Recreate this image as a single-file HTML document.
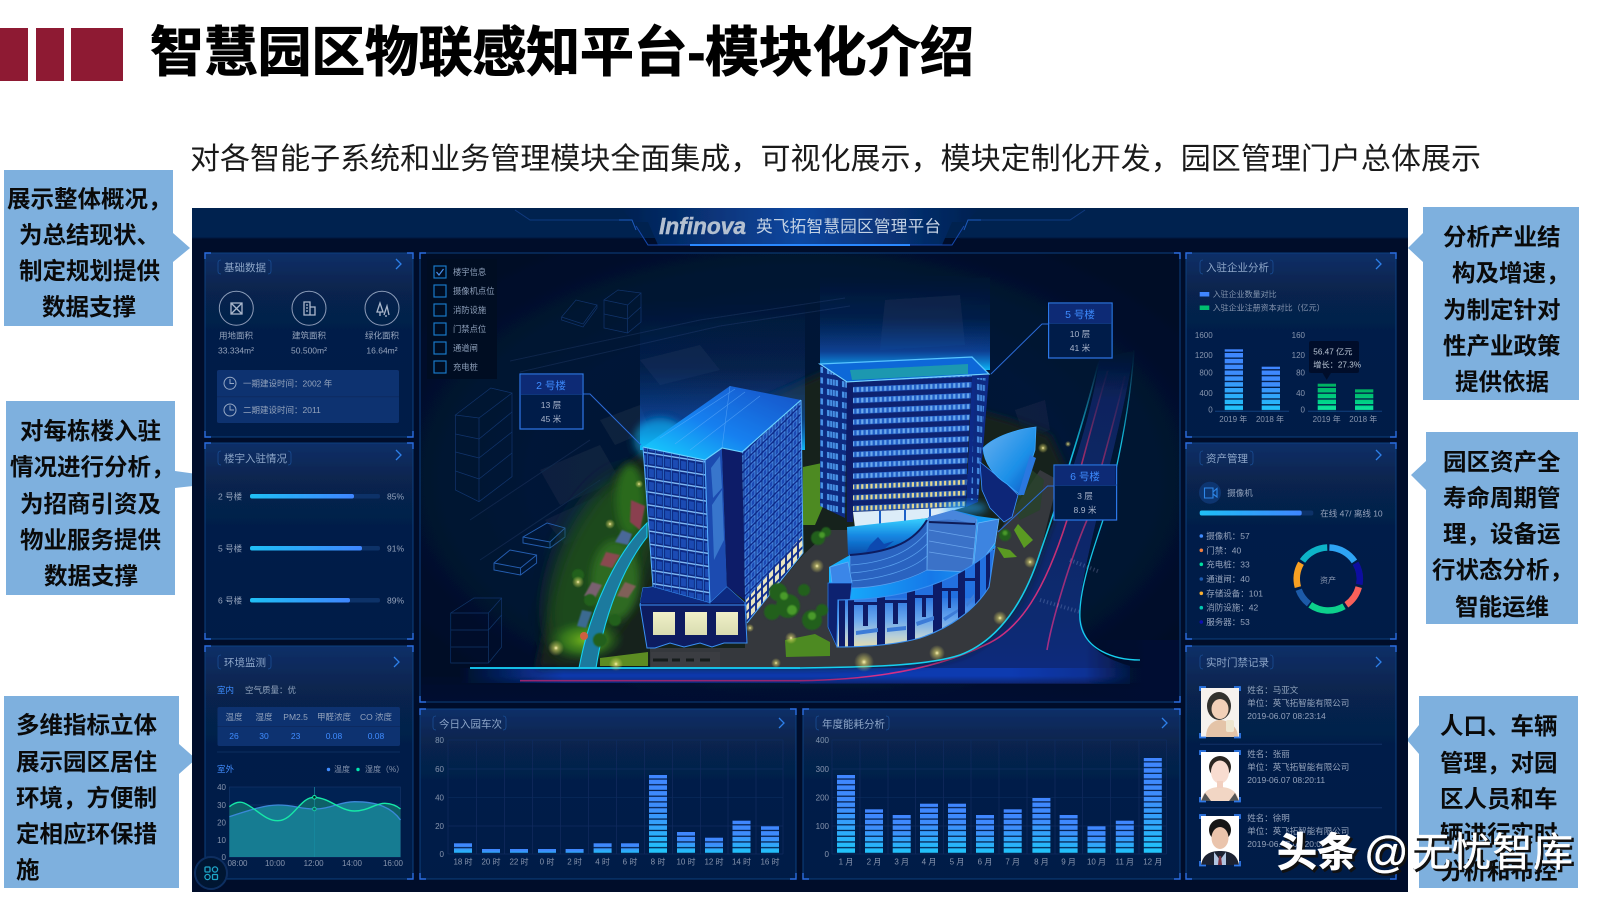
<!DOCTYPE html>
<html lang="zh"><head><meta charset="utf-8"><title>智慧园区物联感知平台-模块化介绍</title>
<style>
html,body{margin:0;padding:0;background:#fff}
svg{display:block}
text{font-family:"Liberation Sans","Noto Sans CJK SC",sans-serif}
.h{font-weight:700;font-size:23.5px;fill:#0a0a0a}
.s{font-size:9px;fill:#9aaac4}
.t{font-size:10.5px;fill:#8fa6c8}
.m{font-size:8.5px;fill:#93a3bc}
.ax{font-size:8px;fill:#8494ae}
.c{text-anchor:middle}
.e{text-anchor:end}
.b{fill:#3f8cff}
</style></head><body>
<svg width="1600" height="900" viewBox="0 0 1600 900" xmlns="http://www.w3.org/2000/svg">
<defs>
<linearGradient id="pan" x1="0" y1="0" x2="0" y2="1"><stop offset="0" stop-color="#0a2f68"/><stop offset=".18" stop-color="#07254f"/><stop offset=".5" stop-color="#051d48"/><stop offset="1" stop-color="#051d47"/></linearGradient>
<linearGradient id="bar" x1="0" y1="0" x2="0" y2="1"><stop offset="0" stop-color="#3f86ff"/><stop offset=".4" stop-color="#3e8cfb"/><stop offset="1" stop-color="#1fc6fa"/></linearGradient>
<linearGradient id="grn" x1="0" y1="0" x2="0" y2="1"><stop offset="0" stop-color="#00b060"/><stop offset="1" stop-color="#08e8a0"/></linearGradient>
<linearGradient id="prog" x1="0" y1="0" x2="1" y2="0"><stop offset="0" stop-color="#1fc0f5"/><stop offset="1" stop-color="#3f86ff"/></linearGradient>
<linearGradient id="hdr" x1="0" y1="0" x2="1" y2="0"><stop offset="0" stop-color="#04204f"/><stop offset=".5" stop-color="#0a47a0"/><stop offset="1" stop-color="#04204f"/></linearGradient>
<linearGradient id="beam" x1="0" y1="0" x2="0" y2="1"><stop offset="0" stop-color="#0a6cff" stop-opacity="0"/><stop offset=".45" stop-color="#0a60e0" stop-opacity=".12"/><stop offset=".8" stop-color="#0a70ff" stop-opacity=".45"/><stop offset="1" stop-color="#10c0ff" stop-opacity=".95"/></linearGradient>
<linearGradient id="roofA" x1="0" y1="1" x2="1" y2="0"><stop offset="0" stop-color="#12d8ff"/><stop offset=".45" stop-color="#1880f0"/><stop offset="1" stop-color="#1450c4"/></linearGradient>
<linearGradient id="roofC" x1="0" y1="0" x2="1" y2="0"><stop offset="0" stop-color="#14b4ff"/><stop offset=".6" stop-color="#1478e8"/><stop offset="1" stop-color="#18a4f8"/></linearGradient>
<linearGradient id="pool" x1="0" y1="0" x2="0" y2="1"><stop offset="0" stop-color="#38d0ff"/><stop offset=".5" stop-color="#1484e0"/><stop offset="1" stop-color="#0a4ca8"/></linearGradient>
<linearGradient id="facC" x1="0" y1="0" x2="0" y2="1"><stop offset="0" stop-color="#2470e0"/><stop offset=".45" stop-color="#6aa8ee"/><stop offset=".75" stop-color="#b8cfd8"/><stop offset="1" stop-color="#ecdfa4"/></linearGradient>
<linearGradient id="winBase" x1="0" y1="0" x2="0" y2="1"><stop offset="0" stop-color="#f0f0c8"/><stop offset="1" stop-color="#d8dcb0"/></linearGradient>
<linearGradient id="annex" x1="0" y1="0" x2="1" y2="1"><stop offset="0" stop-color="#6ab0f0"/><stop offset=".6" stop-color="#1c90e8"/><stop offset="1" stop-color="#0e50c0"/></linearGradient>
<linearGradient id="road" x1="0" y1="0" x2="0" y2="1"><stop offset="0" stop-color="#0a2a70" stop-opacity="0"/><stop offset=".15" stop-color="#0a2a70" stop-opacity=".7"/><stop offset=".8" stop-color="#0b2a70"/><stop offset="1" stop-color="#0a2a80"/></linearGradient>
<linearGradient id="band" x1="0" y1="0" x2="1" y2="0"><stop offset="0" stop-color="#0a3aa8" stop-opacity="0"/><stop offset=".15" stop-color="#0a3ab0"/><stop offset=".8" stop-color="#0a3ab0"/><stop offset="1" stop-color="#0a3ab0" stop-opacity="0"/></linearGradient>
<linearGradient id="bandPink" x1="0" y1="0" x2="1" y2="0"><stop offset="0" stop-color="#e0308a" stop-opacity="0"/><stop offset=".4" stop-color="#e0308a" stop-opacity=".6"/><stop offset="1" stop-color="#e0308a"/></linearGradient>
<linearGradient id="fade" x1="0" y1="0" x2="0" y2="1"><stop offset="0" stop-color="#031130" stop-opacity="0"/><stop offset=".5" stop-color="#031130" stop-opacity=".85"/><stop offset="1" stop-color="#031130"/></linearGradient>
<linearGradient id="fadeR" x1="0" y1="0" x2="1" y2="0"><stop offset="0" stop-color="#031130" stop-opacity="0"/><stop offset="1" stop-color="#031130"/></linearGradient>
<linearGradient id="fadeT" x1="0" y1="0" x2="0" y2="1"><stop offset="0" stop-color="#14d0f0" stop-opacity="0"/><stop offset=".3" stop-color="#14d0f0" stop-opacity=".9"/><stop offset="1" stop-color="#14d0f0"/></linearGradient>
<linearGradient id="fadeP" x1="0" y1="0" x2="0" y2="1"><stop offset="0" stop-color="#d8306a" stop-opacity="0"/><stop offset=".35" stop-color="#d8306a" stop-opacity=".85"/><stop offset="1" stop-color="#d8308a"/></linearGradient>
<radialGradient id="sceneBg" cx=".5" cy=".5" r=".6"><stop offset="0" stop-color="#071c34"/><stop offset=".6" stop-color="#051737"/><stop offset="1" stop-color="#020e28"/></radialGradient>
<radialGradient id="glowY"><stop offset="0" stop-color="#fff6b8"/><stop offset=".3" stop-color="#e8e070" stop-opacity=".55"/><stop offset="1" stop-color="#e8e060" stop-opacity="0"/></radialGradient>
<radialGradient id="greenG"><stop offset="0" stop-color="#7ec01e"/><stop offset=".55" stop-color="#3f8a1e" stop-opacity=".75"/><stop offset="1" stop-color="#1e5a18" stop-opacity="0"/></radialGradient>
<filter id="b1" x="-30%" y="-30%" width="160%" height="160%"><feGaussianBlur stdDeviation=".9"/></filter>
<filter id="b4" x="-30%" y="-30%" width="160%" height="160%"><feGaussianBlur stdDeviation="4"/></filter>
<filter id="b8" x="-40%" y="-40%" width="180%" height="180%"><feGaussianBlur stdDeviation="9"/></filter>
<filter id="soft"><feGaussianBlur stdDeviation=".32"/></filter>
<pattern id="segA" patternUnits="userSpaceOnUse" x="0" y="854" width="10" height="5.72"><rect y="0" width="10" height="4.5" fill="#fff"/></pattern>
<pattern id="segB" patternUnits="userSpaceOnUse" x="0" y="411.3" width="10" height="5.83"><rect y="0" width="10" height="4.5" fill="#fff"/></pattern>
<mask id="mA" maskUnits="userSpaceOnUse" x="0" y="0" width="1600" height="900"><rect y="700" width="1600" height="154" fill="url(#segA)"/></mask>
<mask id="mB" maskUnits="userSpaceOnUse" x="0" y="0" width="1600" height="900"><rect y="330" width="1600" height="81.3" fill="url(#segB)"/></mask>
<pattern id="winB" patternUnits="userSpaceOnUse" width="4.6" height="10.8" patternTransform="skewY(-2.4)"><rect width="4.6" height="10.8" fill="#0a2070"/><rect y="1.5" width="4.6" height="5.6" fill="#2460c8"/><rect x="1" y="2" width="2.2" height="4.6" fill="#6aa8ec"/></pattern>
<pattern id="winBY" patternUnits="userSpaceOnUse" width="4.6" height="10.8" patternTransform="skewY(-2.4)"><rect width="4.6" height="10.8" fill="#0a2070"/><rect y="1.5" width="4.6" height="5.6" fill="#2a5cb0"/><rect x="1" y="2" width="2.2" height="4.6" fill="#e4d890"/></pattern>
<pattern id="winBL" patternUnits="userSpaceOnUse" width="15" height="10.5" patternTransform="skewY(10)"><rect width="15" height="10.5" fill="#0a2a80"/><rect x="2" y="1.5" width="11" height="6" fill="#4a94e8"/><path d="M4.8 1.5V7.5M7.5 1.5V7.5M10.2 1.5V7.5" stroke="#0a2a80" stroke-width=".7"/></pattern>
<pattern id="winAL" patternUnits="userSpaceOnUse" width="8" height="13" patternTransform="skewY(9)"><rect width="8" height="13" fill="#0e2c84"/><rect x="1" y="2" width="5" height="8" fill="#1a4cb4"/><rect y="11.6" width="8" height="1.3" fill="#8cc8ff"/><rect x="7" width=".7" height="13" fill="#3a80e0"/></pattern>
<pattern id="winAR" patternUnits="userSpaceOnUse" width="6" height="9" patternTransform="skewY(-45)"><rect width="6" height="9" fill="#0f2c8c"/><rect x="1" y="1.4" width="4" height="6" fill="#1a48b4" stroke="#58a4f4" stroke-width=".7"/></pattern>
<pattern id="winARy" patternUnits="userSpaceOnUse" width="6" height="9" patternTransform="skewY(-45)"><rect width="6" height="9" fill="#0f2c8c"/><rect x="1" y="1.2" width="4" height="6.4" fill="#e8e4c0"/></pattern>
<clipPath id="scene"><rect x="421" y="254" width="758" height="447"/></clipPath>
<clipPath id="cFac"><path d="M838 600C885 600 950 590 995 547L989 587C975 610 950 628 920 638C895 645 865 647 837 647Z"/></clipPath>
</defs>

<!-- slide header -->
<rect x="0" y="28" width="28" height="53" fill="#8e1a33"/>
<rect x="36" y="28" width="28" height="53" fill="#8e1a33"/>
<rect x="71" y="28" width="52" height="53" fill="#8e1a33"/>
<text x="150" y="71" font-size="54" font-weight="700" fill="#000" stroke="#000" stroke-width=".9" textLength="824">智慧园区物联感知平台-模块化介绍</text>
<text x="190" y="169" font-size="30" fill="#1a1a1a" textLength="1291">对各智能子系统和业务管理模块全面集成，可视化展示，模块定制化开发，园区管理门户总体展示</text>

<!-- callouts behind panel -->
<g fill="#7eb0de">
<path d="M4 170H173V233L190 248 173 262V326H4Z"/>
<path d="M6 401H175V471L193 473.5V486L175 488V595H6Z"/>
<path d="M4 696H179V744L196 759 179 774V888H4Z"/>
<path d="M1423 207H1579V400H1423V262L1408 248 1423 233Z"/>
<path d="M1426 432H1578V624H1426V490L1411 475 1426 461Z"/>
<path d="M1419 696H1578V888H1419V754L1407 740 1419 725Z"/>
</g>
<g class="tx">
<text class="h" x="7" y="207">展示整体概况，</text><text class="h" x="19" y="243">为总结现状、</text><text class="h" x="19" y="279">制定规划提供</text><text class="h" x="42" y="315">数据支撑</text>
<text class="h" x="20" y="439">对每栋楼入驻</text><text class="h" x="10" y="475">情况进行分析，</text><text class="h" x="20" y="512">为招商引资及</text><text class="h" x="20" y="548">物业服务提供</text><text class="h" x="44" y="584">数据支撑</text>
<text class="h" x="16" y="733">多维指标立体</text><text class="h" x="16" y="770">展示园区居住</text><text class="h" x="16" y="806">环境，方便制</text><text class="h" x="16" y="842">定相应环保措</text><text class="h" x="16" y="878">施</text>
<text class="h" x="1443" y="245">分析产业结</text><text class="h" x="1452" y="281">构及增速，</text><text class="h" x="1443" y="318">为制定针对</text><text class="h" x="1443" y="354">性产业政策</text><text class="h" x="1455" y="390">提供依据</text>
<text class="h" x="1443" y="470">园区资产全</text><text class="h" x="1443" y="506">寿命周期管</text><text class="h" x="1443" y="542">理，设备运</text><text class="h" x="1432" y="578">行状态分析，</text><text class="h" x="1455" y="615">智能运维</text>
<text class="h" x="1440" y="734">人口、车辆</text><text class="h" x="1440" y="771">管理，对园</text><text class="h" x="1440" y="807">区人员和车</text><text class="h" x="1440" y="842">辆进行实时</text><text class="h" x="1440" y="879">分析和布控</text>
</g>

<!-- dashboard -->
<g filter="url(#soft)">
<rect x="192" y="208" width="1216" height="684" fill="#020f2c"/>
<rect x="192" y="208" width="1216" height="30" fill="#06224f"/>
<path d="M634 222 L648 222 L658 245 H942 L952 222 L966 222 L980 208 H620Z" fill="url(#hdr)"/>
<path d="M192 238 H640 M960 238 H1408" stroke="#04183c" stroke-width="1"/>
<path d="M515 210 L530 220 H619 M1085 210 L1070 220 H981" stroke="#0c3a80" fill="none"/>
<path d="M619 220H632L636 230M981 220H968L964 230" fill="none" stroke="#1a5cc0" stroke-width="1"/>
<path d="M636 226L648 245H952L964 226" fill="none" stroke="#144ab0" stroke-width="1"/>
<path d="M690 245H910" stroke="#2a88ff" stroke-width="2"/>
<text x="659" y="234" font-size="23" font-weight="700" font-style="italic" fill="#b4c0d0" stroke="#b4c0d0" stroke-width=".5" textLength="87" lengthAdjust="spacingAndGlyphs">Infinova</text>
<text x="756" y="232" font-size="16.6" fill="#c4d2e4" textLength="185">英飞拓智慧园区管理平台</text>

<!-- panels -->
<g fill="url(#pan)" stroke="#10407e" stroke-width="1">
<rect x="205" y="253" width="208" height="184"/>
<rect x="205" y="443" width="208" height="196"/>
<rect x="205" y="646" width="208" height="233"/>
<rect x="420" y="709" width="376" height="170"/>
<rect x="803" y="709" width="377" height="170"/>
<rect x="1186" y="253" width="210" height="184"/>
<rect x="1186" y="443" width="210" height="196"/>
<rect x="1186" y="646" width="210" height="233"/>
</g>

<!-- central scene -->
<rect x="420" y="253" width="760" height="449" fill="url(#sceneBg)" stroke="#10407e"/>
<g clip-path="url(#scene)">
<!-- faint city -->
<g stroke="#14406e" fill="none" opacity=".4">
<path d="M510 361L700 320 845 298 M520 372L720 326 850 306"/>
<path d="M470 520L590 440M480 560L600 480"/>
</g>
<g fill="#12304e" opacity=".35"><path d="M640 360L700 345 720 370 660 385Z"/><path d="M600 420L640 405 650 430 615 445Z"/><path d="M540 470L600 445 620 480 560 505Z"/><path d="M545 520L600 495 615 520 565 545Z"/><path d="M1015 410L1045 400 1050 430 1025 440Z"/><path d="M885 300L960 295 965 345 880 350Z"/></g>
<!-- wireframes -->
<g fill="none" stroke="#174a90" stroke-width=".7" opacity=".62">
<path d="M455.4 415L479 418 512 393 490.8 388ZM455.4 415V490L479 501.7 512 476.7V393M479 418V501.7"/>
<path d="M455.4 434L479 439 512 412M455.4 452L479 458 512 432M455.4 471L479 479 512 453"/>
<path d="M604 300L627.6 305 641 293 618 290ZM604 300V328L627.6 333 641 322V293M627.6 305V333M604 314L627.6 319 641 307"/>
<path d="M561.6 317L583 324 597 305 576 300ZM561.6 317V320L583 327 597 308V305"/>
<path d="M450.7 613L474 598H501.6V647L488.4 663H450.7ZM450.7 613H488.4V663M488.4 613L501.6 598M450.7 630H488.4L501.6 615M450.7 647H488.4"/>
</g>
<g fill="none" stroke="#2a6cc8" stroke-width=".9" opacity=".85">
<path d="M523 537L547 523 565 528V537L550 548 523 543ZM523 537L550 542 565 528M550 542V548"/>
<path d="M494 563L510 550 536.6 555V563L520.5 575 494 570ZM494 563L520.5 568 536.6 555M520.5 568V575"/>
</g>
<!-- road -->
<path d="M1099 360C1092 420 1060 510 1040 553C1025 600 1000 640 960 655C930 665 880 667 800 667V684H1130V666C1110 660 1080 650 1080 607C1082 560 1120 440 1134 350Z" fill="url(#road)"/>
<rect x="460" y="668" width="690" height="15" fill="url(#band)"/>
<path d="M520 680.7H800C860 680 930 672 985 645C1020 630 1045 590 1067 520C1075 490 1090 430 1108 370" fill="none" stroke="url(#fadeP)" stroke-width="1.6"/>
<path d="M1047 650C1052 620 1070 560 1087 520C1100 470 1115 420 1125 375" fill="none" stroke="url(#fadeP)" stroke-width="1.6" opacity=".75"/>
<path d="M1070 560L1100 572M1040 600L1080 612" stroke="#c8d8ff" stroke-width="4" stroke-dasharray="1.2 2.4" opacity=".2"/>
<rect x="421" y="676" width="758" height="26" fill="url(#fade)"/>
<rect x="1085" y="640" width="60" height="62" fill="url(#fadeR)"/>
<rect x="1145" y="640" width="34" height="62" fill="#031130"/>
<!-- ground -->
<path d="M643 453L617 473 577 550 550 607 537 668H800C880 667 930 665 960 655C1000 640 1025 600 1040 553C1050 525 1060 500 1066 470L1050 435 1010 420 830 370Z" fill="#16211f" filter="url(#b4)"/>
<path d="M745 625L803 555 830 530 1000 530 1040 470 1058 480 1040 553C1025 600 1000 640 960 655C930 665 880 667 790 667H650L650 648H745Z" fill="#34373d"/>
<ellipse cx="600" cy="565" rx="42" ry="96" fill="#1f4a1c" filter="url(#b8)" transform="rotate(22 600 565)"/>
<ellipse cx="585" cy="640" rx="40" ry="22" fill="url(#greenG)" opacity=".9"/>
<ellipse cx="615" cy="580" rx="24" ry="40" fill="#2e6a20" filter="url(#b4)"/>
<ellipse cx="630" cy="500" rx="14" ry="36" fill="#2a6a1e" filter="url(#b4)"/>
<path d="M785 640L815 634 830 642V656L786 657Z" fill="#4e8a20"/>
<path d="M803 467L822 463 830 490 815 525 803 525Z" fill="#4e8a22"/>
<path d="M997 547L1010 550 1017 557 1004 558ZM1018 524L1033 540 1024 548 1014 530Z" fill="#5a9a24"/>
<path d="M1012 505L1032 470 1044 480 1040 510 1020 520Z" fill="#26452a" opacity=".7"/>
<path d="M600 658L648 652V666H600Z" fill="#5c8c24"/>
<path d="M651 652L720 652 720 668H651Z" fill="#3a3d42"/>
<path d="M653 660H668M672 660H680M686 660H694M700 660H710" stroke="#181c1e" stroke-width="3"/>
<!-- parking -->
<g filter="url(#b1)"><path d="M631 500L645 506 640 530 630 522Z" fill="#8a4050"/><path d="M622 530L632 534 628 545 615 542Z" fill="#4a6898"/><path d="M606 552L620 555 612 568 600 565Z" fill="#8a4a50"/><path d="M592 582L602 585 595 598 584 596Z" fill="#7a6070"/><path d="M625 582L636 586 628 598 617 596Z" fill="#806058"/><path d="M582 610L592 612 586 628 577 626Z" fill="#3a6a90"/></g>
<!-- left road -->
<path d="M579 668C590 610 615 555 647 523V537C625 565 605 610 596 668Z" fill="#1a7a9e" stroke="#14d0f0" stroke-width="1.1"/>
<circle cx="584" cy="636" r="4" fill="#d06040"/>
<!-- outer road lines -->
<path d="M470 668H800C880 667 930 665 960 655C1000 640 1025 600 1040 553C1055 510 1085 420 1099 360" fill="none" stroke="url(#fadeT)" stroke-width="1.6"/>
<path d="M470 668H800" stroke="#14c8f0" stroke-width="1.8"/>
<path d="M1140 660C1115 660 1083 650 1080 620C1078 590 1095 545 1103 520C1115 480 1130 410 1134 350" fill="none" stroke="url(#fadeT)" stroke-width="1.3"/>
<!-- beams -->
<rect x="640" y="300" width="165" height="150" fill="url(#beam)"/>
<rect x="820" y="275" width="170" height="95" fill="url(#beam)"/>
<ellipse cx="660" cy="440" rx="26" ry="22" fill="#10c8ff" opacity=".5" filter="url(#b4)"/>
<!-- 5号楼 -->
<path d="M820 364L972 357 989 374 847 382Z" fill="#0e68d8" stroke="#58c4ff" stroke-width="1.3"/>
<path d="M850 370L968 364 968 374 852 380Z" fill="#1a98b0"/>
<path d="M847 382L972 375 965 507 853 512Z" fill="url(#winB)"/>
<path d="M852 480L968 474 965 507 853 512Z" fill="url(#winBY)"/>
<path d="M845 382H853V522H847Z" fill="#0a1e68"/>
<path d="M820 364L847 382 845 518 820 506Z" fill="url(#winBL)"/>
<path d="M972 375L989 374 984 438 978 502 966 507Z" fill="#0e2c88"/>
<path d="M975 378H986L978 500H971Z" fill="url(#winBL)" opacity=".9"/>
<path d="M853 512L965 507 928 518 855 528Z" fill="#dcecf8"/>
<path d="M880 524V511M905 522V510M930 517V508" stroke="#1f60c8" stroke-width="2"/>
<path d="M820 364L847 382 989 374" fill="none" stroke="#78d4ff" stroke-width="1"/>
<ellipse cx="965" cy="508" rx="22" ry="6" fill="#20a8ff" opacity=".6" filter="url(#b4)"/>
<!-- annex -->
<path d="M980 462L1007 484 1018 495 1012 517 1004 522 990 508 982 490Z" fill="#0a2878" stroke="#3a90ff" stroke-width=".8"/>
<path d="M983 448C995 436 1018 429 1036 427L1035 450 1020 495 1007 484C994 476 984 463 983 448Z" fill="url(#annex)" stroke="#3aa8ff" stroke-width=".8"/>
<path d="M1030 455L1036 458 1024 495 1018 495Z" fill="#2a78e0"/>
<!-- 6号楼 -->
<path d="M847 527L928 518 927 522C915 540 895 552 848 555Z" fill="url(#pool)"/>
<path d="M870 545L878 537 884 544 894 541 880 552H866Z" fill="#1048b0"/>
<path d="M829 567L850 555C895 552 915 540 927 520L928 518 953 510 977 516 999 519 995 547C950 590 885 600 838 600L829 583Z" fill="url(#roofC)"/>
<path d="M850 555C895 552 915 540 927 520V570C905 582 875 588 850 588Z" fill="#2a64c0" stroke="#5aa0f0" stroke-width=".7"/>
<path d="M851 565C880 563 908 555 927 532M851 573C880 571 910 562 927 544M851 581C880 579 912 570 927 556" fill="none" stroke="#5aa0ee" stroke-width=".7"/>
<path d="M928 518L977 520 972 572 927 570Z" fill="#3a72c8" stroke="#6ab0f4" stroke-width=".7"/>
<path d="M929 530L975 538M929 541L974 549M929 552L973 559" stroke="#6aa4ec" stroke-width=".7"/>
<path d="M928 517L953 510 977 518 974 524 953 519 930 521Z" fill="#4a86dc"/>
<path d="M929 522L975 524" stroke="#101c58" stroke-width="2"/>
<path d="M978 523L999 519 995 543 973 572Z" fill="#3c84e0" stroke="#6ab8f8" stroke-width=".7"/>
<path d="M850 555C895 552 915 540 927 520" fill="none" stroke="#0a1c60" stroke-width="2"/>
<path d="M830 567L848 562 852 583 832 583Z" fill="#3a86e8" stroke="#60b0f8" stroke-width=".7"/>
<path d="M828 583H852L850 600 838 600 837 647 828 627Z" fill="#0a2070" stroke="#2a80f0" stroke-width=".7"/>
<g clip-path="url(#cFac)">
<rect x="830" y="595" width="170" height="55" fill="url(#facC)"/>
<rect x="830" y="550" width="170" height="48" fill="#2470e0"/>
<g fill="#0a1e68"><rect x="839" y="590" width="6" height="60"/><rect x="848" y="590" width="6" height="60"/><rect x="877" y="590" width="8" height="60"/><rect x="907" y="590" width="8" height="60"/><rect x="933" y="570" width="9" height="70"/><rect x="958" y="565" width="7" height="70"/><rect x="975" y="550" width="5" height="60"/><rect x="986" y="545" width="4" height="50"/><rect x="854" y="602" width="23" height="3"/><rect x="863" y="602" width="5" height="24"/><rect x="885" y="600" width="22" height="3"/><rect x="893" y="600" width="5" height="24"/><rect x="915" y="595" width="18" height="3"/><rect x="922" y="595" width="4" height="22"/><rect x="942" y="588" width="16" height="3"/><rect x="948" y="588" width="3" height="20"/><rect x="965" y="578" width="10" height="3"/></g>
<g fill="#3e7cd8"><path d="M856 631L878 628V632L856 635ZM887 628L906 626V630L887 632ZM916 622L934 616V620L917 626ZM943 618L958 609V612L945 621ZM966 604L974 594V598L967 607Z"/></g>
</g>
<path d="M838 600C885 600 950 590 995 547L989 587C975 610 950 628 920 638C895 645 865 647 837 647Z" fill="none" stroke="#3a90f0" stroke-width="1.1"/>
<!-- 2号楼 -->
<path d="M643 447L730 386 801 400 742 452 722 448 705 460Z" fill="url(#roofA)"/>
<path d="M730 386L722 448M660 438L735 389M675 444L745 392M690 450L760 396" stroke="#70b8ff" stroke-width=".6" opacity=".55"/>
<path d="M643 447L705 460 710 603 653 587Z" fill="url(#winAL)"/>
<path d="M705 460L722 448 727 587 710 603Z" fill="#1a4cb0"/>
<path d="M711 468L720 456 722 488 713 498ZM712 505L722 490 724 540 714 560Z" fill="#3876cc"/>
<path d="M722 448L742 452 745 600 727 587Z" fill="#091c68"/>
<path d="M742 452L801 400 803 553 747 623 745 600Z" fill="url(#winAR)"/>
<path d="M747 623L803 553 802 536 746 600Z" fill="url(#winARy)"/>
<path d="M643 447L705 460 722 448 742 452 801 400" fill="none" stroke="#6cd4ff" stroke-width="1.1"/>
<path d="M643 447L653 587M705 460L710 603M801 400L803 553 747 623" stroke="#58b0ff" stroke-width="1" fill="none"/>
<path d="M640 605L643 588 653 587 710 603 727 587 745 603 747 643 724 643 712 647 700 643 684 647 670 643 655 648 647 648Z" fill="#0a1e60" stroke="#3a90f4" stroke-width="1"/>
<path d="M643 588L653 587 710 603 727 587 745 603H640Z" fill="#0c2c80"/>
<rect x="653" y="612" width="22" height="23" fill="url(#winBase)"/>
<rect x="685" y="612" width="22" height="23" fill="url(#winBase)"/>
<rect x="716" y="612" width="22" height="23" fill="url(#winBase)"/>
<path d="M640 605H747" stroke="#3a90f4"/>
<!-- lights & trees -->
<g fill="#22601f" filter="url(#b1)">
<circle cx="778" cy="592" r="9"/><circle cx="788" cy="606" r="12"/><circle cx="772" cy="612" r="8"/><circle cx="804" cy="590" r="6"/><circle cx="812" cy="620" r="10"/><circle cx="822" cy="610" r="6"/>
<circle cx="818" cy="538" r="7"/><circle cx="826" cy="532" r="5"/>
<circle cx="1005" cy="535" r="6"/><circle cx="600" cy="640" r="7"/><circle cx="590" cy="600" r="6"/><circle cx="578" cy="575" r="6"/><circle cx="615" cy="620" r="6"/>
</g>
<g fill="#4a9a2a" filter="url(#b1)"><circle cx="784" cy="596" r="4"/><circle cx="792" cy="610" r="5"/><circle cx="812" cy="616" r="4"/><circle cx="822" cy="535" r="3"/><circle cx="1005" cy="533" r="2.5"/></g>
<g>
<circle cx="556" cy="648" r="8" fill="url(#glowY)"/><circle cx="578" cy="582" r="6" fill="url(#glowY)"/><circle cx="610" cy="524" r="5" fill="url(#glowY)"/><circle cx="616" cy="664" r="7" fill="url(#glowY)"/><circle cx="639" cy="484" r="4" fill="url(#glowY)"/><circle cx="750" cy="628" r="4" fill="url(#glowY)"/><circle cx="791" cy="638" r="6" fill="url(#glowY)"/><circle cx="776" cy="663" r="5" fill="url(#glowY)"/><circle cx="817" cy="566" r="7" fill="url(#glowY)"/><circle cx="864" cy="662" r="10" fill="url(#glowY)"/><circle cx="937" cy="653" r="8" fill="url(#glowY)"/><circle cx="1000" cy="618" r="7" fill="url(#glowY)"/><circle cx="1030" cy="562" r="6" fill="url(#glowY)"/><circle cx="1043" cy="448" r="5" fill="url(#glowY)"/><circle cx="1068" cy="444" r="3" fill="url(#glowY)"/>
</g>
<!-- callouts -->
<g fill="none" stroke="#2a6cd8"><path d="M583 394H590L641 445"/><path d="M1048.6 324H1042L991 374"/><path d="M1054 486H1047.6L998 532"/></g>
<g fill="#041a48" stroke="#2a78e8" stroke-width="1.2">
<rect x="520" y="374" width="63" height="55"/><rect x="1048.6" y="303" width="63.5" height="55"/><rect x="1054" y="465" width="62.6" height="55"/>
</g>
<path d="M520 394H583M1049 323H1112M1054 485H1117" stroke="#1a4fb0"/>
<rect x="521" y="375" width="61" height="19" fill="#0a2a74"/><rect x="1049.6" y="304" width="61.5" height="19" fill="#0a2a74"/><rect x="1055" y="466" width="60.6" height="19" fill="#0a2a74"/>
<g font-size="10.5" text-anchor="middle" fill="#3f8cff"><text x="551" y="389">2 号楼</text><text x="1080" y="318">5 号楼</text><text x="1085" y="480">6 号楼</text></g>
<g font-size="8.6" text-anchor="middle" fill="#a5b4ca"><text x="551" y="408">13 层</text><text x="551" y="422">45 米</text><text x="1080" y="337">10 层</text><text x="1080" y="351">41 米</text><text x="1085" y="499">3 层</text><text x="1085" y="513">8.9 米</text></g>
<!-- checklist -->
<rect x="427" y="259" width="70" height="120" fill="#020c20"/>
<g fill="none" stroke="#1a78c8" stroke-width="1.2"><rect x="434" y="266" width="12" height="12"/><rect x="434" y="285" width="12" height="12"/><rect x="434" y="304" width="12" height="12"/><rect x="434" y="323" width="12" height="12"/><rect x="434" y="342" width="12" height="12"/><rect x="434" y="361" width="12" height="12"/><path d="M436.5 272L439 275 443.5 269" stroke="#4a90e8"/></g>
<g font-size="8.3" fill="#8da0ba"><text x="453" y="275">楼宇信息</text><text x="453" y="294">摄像机点位</text><text x="453" y="313">消防设施</text><text x="453" y="332">门禁点位</text><text x="453" y="351">通道闸</text><text x="453" y="370">充电桩</text></g>
</g>

<!-- corners -->
<g fill="none" stroke="#2a6de0" stroke-width="1.4">
<path d="M205 259V253H211M407 253H413V259M205 431V437H211M407 437H413V431"/>
<path d="M205 449V443H211M407 443H413V449M205 633V639H211M407 639H413V633"/>
<path d="M205 652V646H211M407 646H413V652M205 873V879H211M407 879H413V873"/>
<path d="M420 259V253H426M1174 253H1180V259M420 696V702H426M1174 702H1180V696"/>
<path d="M420 715V709H426M790 709H796V715M420 873V879H426M790 879H796V873"/>
<path d="M803 715V709H809M1174 709H1180V715M803 873V879H809M1174 879H1180V873"/>
<path d="M1186 259V253H1192M1390 253H1396V259M1186 431V437H1192M1390 437H1396V431"/>
<path d="M1186 449V443H1192M1390 443H1396V449M1186 633V639H1192M1390 639H1396V633"/>
<path d="M1186 652V646H1192M1390 646H1396V652M1186 873V879H1192M1390 879H1396V873"/>
</g>
<!-- panel titles -->
<g fill="none" stroke="#1a4c94" stroke-width=".8">
<path d="M221 260Q218 260 218 263V271Q218 274 221 274M268 260Q271 260 271 263V271Q271 274 268 274"/>
<path d="M221 451Q218 451 218 454V462Q218 465 221 465M288 451Q291 451 291 454V462Q291 465 288 465"/>
<path d="M221 655Q218 655 218 658V666Q218 669 221 669M268 655Q271 655 271 658V666Q271 669 268 669"/>
<path d="M436 716Q433 716 433 719V727Q433 730 436 730M503 716Q506 716 506 719V727Q506 730 503 730"/>
<path d="M819 716Q816 716 816 719V727Q816 730 819 730M886 716Q889 716 889 719V727Q889 730 886 730"/>
<path d="M1203 260Q1200 260 1200 263V271Q1200 274 1203 274M1270 260Q1273 260 1273 263V271Q1273 274 1270 274"/>
<path d="M1203 451Q1200 451 1200 454V462Q1200 465 1203 465M1250 451Q1253 451 1253 454V462Q1253 465 1250 465"/>
<path d="M1203 655Q1200 655 1200 658V666Q1200 669 1203 669M1270 655Q1273 655 1273 658V666Q1273 669 1270 669"/>
</g>
<g class="t"><text class="t" x="224" y="271">基础数据</text><text class="t" x="224" y="462">楼宇入驻情况</text><text class="t" x="224" y="666">环境监测</text><text class="t" x="439" y="727.5">今日入园车次</text><text class="t" x="822" y="727.5">年度能耗分析</text><text class="t" x="1206" y="271">入驻企业分析</text><text class="t" x="1206" y="462">资产管理</text><text class="t" x="1206" y="666">实时门禁记录</text></g>
<g fill="none" stroke="#2f7fe8" stroke-width="1.3">
<path d="M396 259L401 264 396 269M396 450L401 455 396 460M394 657L399 662 394 667M779 718L784 723 779 728M1162 718L1167 723 1162 728M1376 259L1381 264 1376 269M1376 450L1381 455 1376 460M1376 657L1381 662 1376 667"/>
</g>

<!-- 基础数据 -->
<g fill="none" stroke="#8c9cb8" stroke-width="1"><circle cx="236.3" cy="308.3" r="17"/><circle cx="309" cy="308.3" r="17"/><circle cx="382" cy="308.3" r="17"/></g>
<g fill="none" stroke="#aab8cc" stroke-width="1.3">
<path d="M231 303H242V314H231ZM231 303L242 314M242 303L231 314"/>
<path d="M304 302H310V315H304ZM310 307H315V315H310ZM306 305H308M306 308H308M306 311H308"/>
<path d="M377 312L380 303 383 312ZM384 315L387 306 389 315M380 312V316M386 315V317"/>
</g>
<g class="m">
<text class="m c" x="236" y="338.5">用地面积</text><text class="m c" x="309" y="338.5">建筑面积</text><text class="m c" x="382" y="338.5">绿化面积</text>
<text class="m c" x="236" y="353.5">33.334m²</text><text class="m c" x="309" y="353.5">50.500m²</text><text class="m c" x="382" y="353.5">16.64m²</text></g>
<rect x="217" y="370" width="182" height="53" rx="2" fill="#0e3270"/>
<path d="M217 396.7H399" stroke="#0a2a60"/>
<g fill="none" stroke="#95a8c4" stroke-width="1"><circle cx="230" cy="383.3" r="6"/><circle cx="230" cy="410" r="6"/><path d="M230 379V383.5H234M230 405.5V410H234"/></g>
<text class="m" x="243" y="386.5">一期建设时间：2002 年</text><text class="m" x="243" y="413">二期建设时间：2011</text>

<!-- 楼宇入驻 -->
<g fill="#0e3068"><rect x="250" y="494" width="130" height="4.5" rx="2"/><rect x="250" y="546" width="130" height="4.5" rx="2"/><rect x="250" y="598" width="130" height="4.5" rx="2"/></g>
<g fill="url(#prog)"><rect x="250" y="494" width="104" height="4.5" rx="2"/><rect x="250" y="546" width="112" height="4.5" rx="2"/><rect x="250" y="598" width="100" height="4.5" rx="2"/></g>
<g class="m"><text class="m" x="218" y="499.5">2 号楼</text><text class="m" x="218" y="551.5">5 号楼</text><text class="m" x="218" y="603.5">6 号楼</text><text class="m" x="387" y="499.5">85%</text><text class="m" x="387" y="551.5">91%</text><text class="m" x="387" y="603.5">89%</text></g>

<!-- 环境监测 -->
<text class="m b" x="217" y="693">室内</text><text class="m" x="245" y="693">空气质量：优</text>
<rect x="217.5" y="707" width="182.5" height="39" rx="2" fill="#0e3270"/>
<path d="M217.5 726.5H400" stroke="#0a2a60"/>
<path d="M217 752H400" stroke="#0e2e60"/>
<g class="m"><text class="m c" x="234" y="720">温度</text><text class="m c" x="264" y="720">湿度</text><text class="m c" x="295.6" y="720">PM2.5</text><text class="m c" x="334" y="720">甲醛浓度</text><text class="m c" x="376" y="720">CO 浓度</text></g>
<g font-size="8.5" fill="#3f8cff" text-anchor="middle"><text x="234" y="739">26</text><text x="264" y="739">30</text><text x="295.6" y="739">23</text><text x="334" y="739">0.08</text><text x="376" y="739">0.08</text></g>
<text class="m b" x="217" y="772">室外</text>
<circle cx="328.5" cy="769.5" r="1.7" fill="#3f8cff"/><text class="ax" x="334" y="772">温度</text><circle cx="358" cy="769.5" r="1.7" fill="#00e8b0"/><text class="ax" x="365" y="772">湿度（%）</text>
<rect x="229.4" y="787" width="171" height="70" fill="#062252" stroke="#0e3468" stroke-width=".7"/>
<path d="M229.4 805H400.5M229.4 822.7H400.5M229.4 840H400.5" stroke="#0e3468" stroke-width=".7"/>
<path d="M229.4 806.7C234 803 239 801 244 803C256 808 265 821 278 820.7C294 820 300 797 314.4 797.3C330 798 340 811 354.6 811C368 811 376 803 385 803.3C392 803.6 397 806 400.5 809V857H229.4Z" fill="#0c6068"/>
<path d="M229.4 816.7C250 810 265 805 278 805C295 805 300 809 314.4 809C330 809 340 801.7 354.6 801.7C378 801.7 392 808 400.5 820V857H229.4Z" fill="#167c92"/>
<path d="M229.4 816.7C250 810 265 805 278 805C295 805 300 809 314.4 809C330 809 340 801.7 354.6 801.7C378 801.7 392 808 400.5 820" fill="none" stroke="#3a88d8" stroke-width="1.3"/>
<path d="M229.4 806.7C234 803 239 801 244 803C256 808 265 821 278 820.7C294 820 300 797 314.4 797.3C330 798 340 811 354.6 811C368 811 376 803 385 803.3C392 803.6 397 806 400.5 809" fill="none" stroke="#14e8a8" stroke-width="1.4"/>
<path d="M314.4 787V857" stroke="#1a8aa0" stroke-width=".7"/>
<circle cx="314.4" cy="797.3" r="1.8" fill="#021a20" stroke="#14e8a8"/><circle cx="314.4" cy="809" r="1.8" fill="#0c6060" stroke="#14c8a0"/>
<g class="ax"><text class="ax e" x="226" y="790">40</text><text class="ax e" x="226" y="808">30</text><text class="ax e" x="226" y="825.5">20</text><text class="ax e" x="226" y="843">10</text><text class="ax e" x="226" y="860">0</text>
<text class="ax c" x="237.5" y="866">08:00</text><text class="ax c" x="275" y="866">10:00</text><text class="ax c" x="313.6" y="866">12:00</text><text class="ax c" x="352" y="866">14:00</text><text class="ax c" x="393" y="866">16:00</text></g>
<circle cx="211" cy="873" r="16" fill="#031433" stroke="#0c2f60" stroke-width="2"/>
<g fill="none" stroke="#1ea8c8" stroke-width="1.3"><rect x="205" y="867" width="5" height="5" rx="1"/><circle cx="215" cy="869.5" r="2.6"/><circle cx="207.5" cy="877" r="2.6"/><rect x="212.5" y="874.5" width="5" height="5" rx="1"/></g>

<!-- 今日 chart -->
<g stroke="#0b2c60" stroke-width=".7" fill="none"><path d="M448.3 740H783M448.3 769H783M448.3 797.7H783M448.3 826H783M448.3 854H783"/><path d="M448 740V854M476.5 740V854M504.5 740V854M532.5 740V854M560.5 740V854M588.5 740V854M616.5 740V854M644.5 740V854M672.5 740V854M700.5 740V854M728 740V854M756 740V854M783 740V854"/></g>
<g stroke="#0b2c60" stroke-width=".7" fill="none"><path d="M831.7 740H1166.5M831.7 769H1166.5M831.7 797.7H1166.5M831.7 826H1166.5M831.7 854H1166.5"/><path d="M832 740V854M860 740V854M888 740V854M915.5 740V854M943.5 740V854M971 740V854M999 740V854M1027 740V854M1055 740V854M1082.5 740V854M1110.5 740V854M1139 740V854M1166.5 740V854"/></g>
<g mask="url(#mA)" fill="url(#bar)">
<rect x="454" y="843.3" width="18" height="10.7"/><rect x="482" y="849" width="18" height="5"/><rect x="510" y="849" width="18" height="5"/><rect x="538" y="849" width="18" height="5"/><rect x="565.6" y="849" width="18" height="5"/><rect x="593.6" y="843.3" width="18" height="10.7"/><rect x="621" y="843.3" width="18" height="10.7"/><rect x="649" y="775" width="18" height="79"/><rect x="677" y="832" width="18" height="22"/><rect x="705" y="837.7" width="18" height="16.3"/><rect x="732.5" y="820.7" width="18" height="33.3"/><rect x="761" y="826.3" width="18" height="27.7"/>
<rect x="837" y="775" width="18" height="79"/><rect x="865" y="809.3" width="18" height="44.7"/><rect x="892.7" y="815" width="18" height="39"/><rect x="920" y="803.7" width="18" height="50.3"/><rect x="948" y="803.7" width="18" height="50.3"/><rect x="976" y="815" width="18" height="39"/><rect x="1003.7" y="809.3" width="18" height="44.7"/><rect x="1032.4" y="798" width="18" height="56"/><rect x="1059.6" y="815" width="18" height="39"/><rect x="1087.5" y="826.3" width="18" height="27.7"/><rect x="1115.8" y="820.7" width="18" height="33.3"/><rect x="1143.8" y="758" width="18" height="96"/>
</g>
<g class="ax"><text class="ax e" x="444" y="743">80</text><text class="ax e" x="444" y="772">60</text><text class="ax e" x="444" y="800.7">40</text><text class="ax e" x="444" y="829">20</text><text class="ax e" x="444" y="857">0</text>
<text class="ax c" x="463" y="864.5">18 时</text><text class="ax c" x="491" y="864.5">20 时</text><text class="ax c" x="519" y="864.5">22 时</text><text class="ax c" x="547" y="864.5">0 时</text><text class="ax c" x="574.6" y="864.5">2 时</text><text class="ax c" x="602.6" y="864.5">4 时</text><text class="ax c" x="630" y="864.5">6 时</text><text class="ax c" x="658" y="864.5">8 时</text><text class="ax c" x="686" y="864.5">10 时</text><text class="ax c" x="714" y="864.5">12 时</text><text class="ax c" x="741.5" y="864.5">14 时</text><text class="ax c" x="770" y="864.5">16 时</text></g>

<!-- 年度 chart labels -->
<g class="ax"><text class="ax e" x="829" y="743">400</text><text class="ax e" x="829" y="772">300</text><text class="ax e" x="829" y="800.7">200</text><text class="ax e" x="829" y="829">100</text><text class="ax e" x="829" y="857">0</text>
<text class="ax c" x="846" y="864.5">1 月</text><text class="ax c" x="874" y="864.5">2 月</text><text class="ax c" x="901.7" y="864.5">3 月</text><text class="ax c" x="929" y="864.5">4 月</text><text class="ax c" x="957" y="864.5">5 月</text><text class="ax c" x="985" y="864.5">6 月</text><text class="ax c" x="1012.7" y="864.5">7 月</text><text class="ax c" x="1041.4" y="864.5">8 月</text><text class="ax c" x="1068.6" y="864.5">9 月</text><text class="ax c" x="1096.5" y="864.5">10 月</text><text class="ax c" x="1124.8" y="864.5">11 月</text><text class="ax c" x="1152.8" y="864.5">12 月</text></g>

<!-- 入驻企业 -->
<rect x="1199.7" y="292" width="9.6" height="4.5" fill="#3f86ff"/><rect x="1199.7" y="305.5" width="9.6" height="4.5" fill="#00c070"/>
<text class="ax" x="1212.7" y="297">入驻企业数量对比</text><text class="ax" x="1212.7" y="310.5">入驻企业注册资本对比（亿元）</text>
<path d="M1215 411.3H1289M1308 411.3H1382" stroke="#11407e"/>
<g class="ax"><text class="ax e" x="1212.7" y="338">1600</text><text class="ax e" x="1212.7" y="358">1200</text><text class="ax e" x="1212.7" y="375.5">800</text><text class="ax e" x="1212.7" y="396">400</text><text class="ax e" x="1212.7" y="412.5">0</text>
<text class="ax e" x="1305" y="338">160</text><text class="ax e" x="1305" y="358">120</text><text class="ax e" x="1305" y="375.5">80</text><text class="ax e" x="1305" y="396">40</text><text class="ax e" x="1305" y="412.5">0</text>
<text class="ax c" x="1233.3" y="422">2019 年</text><text class="ax c" x="1270" y="422">2018 年</text><text class="ax c" x="1326.7" y="422">2019 年</text><text class="ax c" x="1363.3" y="422">2018 年</text></g>
<g mask="url(#mB)"><rect x="1224.7" y="349.3" width="18.3" height="62" fill="url(#bar)"/><rect x="1261.7" y="366.7" width="18.3" height="44.6" fill="url(#bar)"/><rect x="1317.7" y="383.7" width="18.3" height="27.6" fill="url(#grn)"/><rect x="1355" y="389.3" width="18.3" height="22" fill="url(#grn)"/></g>
<path d="M1309 343Q1309 341 1311 341H1357Q1359 341 1359 343V371Q1359 373 1357 373H1331L1326.7 380 1322.5 373H1311Q1309 373 1309 371Z" fill="#04112c"/>
<text x="1313.3" y="354.5" font-size="8.2" fill="#b8c4d4">56.47 亿元</text><text x="1313.3" y="367.5" font-size="8.2" fill="#b8c4d4">增长：27.3%</text>

<!-- 资产管理 -->
<circle cx="1210" cy="492.7" r="11" fill="#0f3670"/>
<path d="M1204.5 488H1213V498H1204.5ZM1213 492L1217 488.5V497L1213 494" fill="none" stroke="#2f86e8" stroke-width="1.1"/>
<text class="m" x="1227.3" y="496">摄像机</text>
<rect x="1199.7" y="510.5" width="113.6" height="5" rx="2" fill="#0e3068"/><rect x="1199.7" y="510.5" width="102" height="5" rx="2" fill="url(#prog)"/>
<text class="m" x="1320.3" y="516.5">在线 47/ 离线 10</text>
<g><circle cx="1201.3" cy="536" r="1.8" fill="#3f8cff"/><circle cx="1201.3" cy="550.3" r="1.8" fill="#f07f40"/><circle cx="1201.3" cy="564.3" r="1.8" fill="#00e0a0"/><circle cx="1201.3" cy="579" r="1.8" fill="#1a5ab0"/><circle cx="1201.3" cy="593.3" r="1.8" fill="#f8b030"/><circle cx="1201.3" cy="607.7" r="1.8" fill="#00c8b0"/><circle cx="1201.3" cy="622" r="1.8" fill="#1010b0"/></g>
<g class="m"><text class="m" x="1206.3" y="539">摄像机：57</text><text class="m" x="1206.3" y="553.3">门禁：40</text><text class="m" x="1206.3" y="567.3">充电桩：33</text><text class="m" x="1206.3" y="582">通道闸：40</text><text class="m" x="1206.3" y="596.3">存储设备：101</text><text class="m" x="1206.3" y="610.7">消防设施：42</text><text class="m" x="1206.3" y="625">服务器：53</text></g>
<g fill="none" stroke-width="6.5">
<circle cx="1328.3" cy="579" r="31.5" pathLength="360" stroke-dasharray="54 360" transform="rotate(-88 1328.3 579)" stroke="#2fa4f4"/>
<circle cx="1328.3" cy="579" r="31.5" pathLength="360" stroke-dasharray="40 360" transform="rotate(-30 1328.3 579)" stroke="#1010a0"/>
<circle cx="1328.3" cy="579" r="31.5" pathLength="360" stroke-dasharray="40 360" transform="rotate(15 1328.3 579)" stroke="#f8605a"/>
<circle cx="1328.3" cy="579" r="31.5" pathLength="360" stroke-dasharray="65 360" transform="rotate(60 1328.3 579)" stroke="#08d08c"/>
<circle cx="1328.3" cy="579" r="31.5" pathLength="360" stroke-dasharray="32 360" transform="rotate(128 1328.3 579)" stroke="#1a5aa8"/>
<circle cx="1328.3" cy="579" r="31.5" pathLength="360" stroke-dasharray="45 360" transform="rotate(165 1328.3 579)" stroke="#f8a020"/>
<circle cx="1328.3" cy="579" r="31.5" pathLength="360" stroke-dasharray="53 360" transform="rotate(215 1328.3 579)" stroke="#10b4c8"/>
</g>
<text class="ax c" x="1328" y="583">资产</text>

<!-- 门禁 -->
<path d="M1200 744.3H1382M1200 807.7H1382" stroke="#0e3068"/>
<g>
<rect x="1201" y="688" width="38" height="49" fill="#f6f2ee"/>
<path d="M1206 737C1206 725 1214 720 1220 720C1226 720 1238 725 1238 737Z" fill="#e4c4a8"/>
<ellipse cx="1219" cy="706" rx="12" ry="14" fill="#33302e"/><ellipse cx="1220" cy="709" rx="8.5" ry="10" fill="#f2d0b8"/>
<rect x="1226" y="720" width="8" height="12" rx="2" fill="#eee6d0"/>
<rect x="1201" y="752" width="38" height="49" fill="#fff"/>
<path d="M1201 801C1203 790 1212 787 1220 787C1228 787 1237 790 1239 801Z" fill="#f2d6c4"/>
<path d="M1201 801L1205 793 1211 801ZM1239 801L1235 793 1229 801Z" fill="#555"/>
<ellipse cx="1220" cy="767" rx="11" ry="11" fill="#2a2624"/><ellipse cx="1220" cy="772" rx="9" ry="11.5" fill="#f8dcd0"/><rect x="1217" y="781" width="6" height="7" fill="#f2d0c0"/>
<rect x="1201" y="816" width="38" height="49" fill="#fff"/>
<path d="M1201 865C1203 853 1212 851 1220 851C1228 851 1237 853 1239 865Z" fill="#1e2430"/><path d="M1214 852L1220 860 1226 852 1226 865H1214Z" fill="#b0c4e0"/><path d="M1219 856H1221L1222 865H1218Z" fill="#7a3040"/>
<ellipse cx="1220" cy="830" rx="11" ry="11" fill="#121212"/><ellipse cx="1220" cy="838" rx="8.5" ry="11" fill="#eac4ac"/>
</g>
<g fill="none" stroke="#2f78e8" stroke-width="1.8">
<path d="M1200 691V687H1206M1234 687H1240V691M1200 733V737.5H1206M1234 737.5H1240V733"/>
<path d="M1200 755V751H1206M1234 751H1240V755M1200 797V801.5H1206M1234 801.5H1240V797"/>
<path d="M1200 819V815H1206M1234 815H1240V819M1200 861V865.5H1206M1234 865.5H1240V861"/>
</g>
<g class="m"><text class="m" x="1247.3" y="693">姓名：马亚文</text><text class="m" x="1247.3" y="706">单位：英飞拓智能有限公司</text><text class="m" x="1247.3" y="719">2019-06.07 08:23:14</text>
<text class="m" x="1247.3" y="757">姓名：张丽</text><text class="m" x="1247.3" y="770">单位：英飞拓智能有限公司</text><text class="m" x="1247.3" y="783">2019-06.07 08:20:11</text>
<text class="m" x="1247.3" y="821">姓名：徐明</text><text class="m" x="1247.3" y="834">单位：英飞拓智能有限公司</text><text class="m" x="1247.3" y="847">2019-06.07 08:20:08</text></g>
</g>

<!-- watermark -->
<g fill="#111" transform="translate(2 2)" font-size="40"><text x="1277" y="866" font-weight="700" stroke="#111" stroke-width="2">头条</text><text x="1364" y="867" font-size="44" stroke="#111" stroke-width="1.4">@</text><text x="1411" y="866" stroke="#111" stroke-width="1.4" textLength="162">无忧智库</text></g>
<g fill="#fff" font-size="40" stroke="#fff" stroke-width=".4"><text x="1277" y="866" font-weight="700" stroke-width=".8">头条</text><text x="1364" y="867" font-size="44">@</text><text x="1411" y="866" textLength="162">无忧智库</text></g>
</svg>
</body></html>
